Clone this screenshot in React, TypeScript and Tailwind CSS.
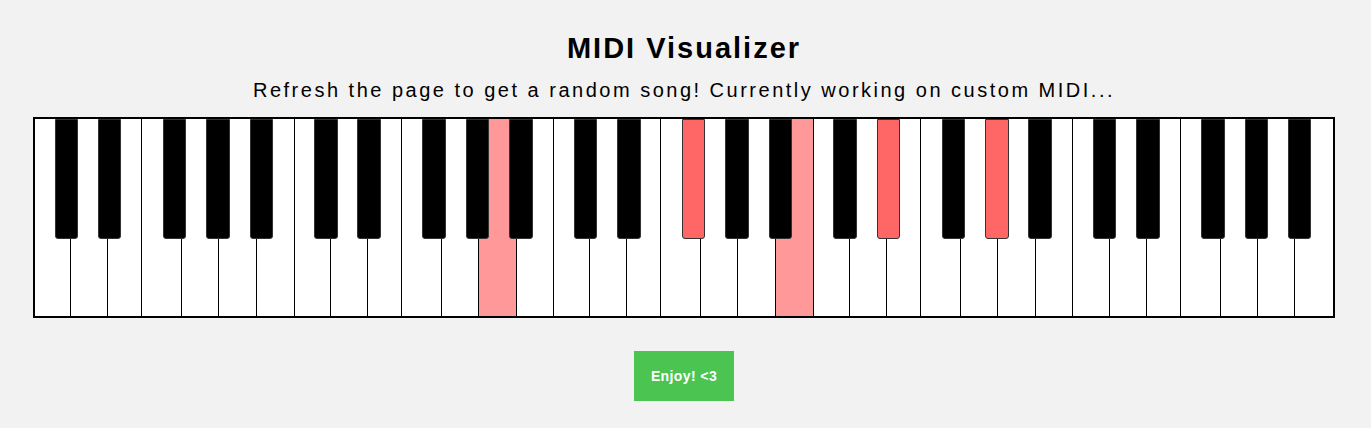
import React from "react";

type WhiteKey = { note: string; w: string };
type BlackKey = { note: string; left: string };

const whites: WhiteKey[] = [
  { note: "C", w: "w-[36.3px]" },
  { note: "D", w: "w-[37px]" },
  { note: "E", w: "w-[34px]" },
  { note: "F", w: "w-[40px]" },
  { note: "G", w: "w-[37px]" },
  { note: "A", w: "w-[37.7px]" },
  { note: "B", w: "w-[37.6px]" },
];

const blacks: BlackKey[] = [
  { note: "C#", left: "left-[19.6px]" },
  { note: "D#", left: "left-[62.9px]" },
  { note: "F#", left: "left-[127.8px]" },
  { note: "G#", left: "left-[171.3px]" },
  { note: "A#", left: "left-[214.6px]" },
];

const active = new Set(["A2", "F#3", "B3", "D#4", "G#4"]);

function Octave({ n, last }: { n: number; last: boolean }) {
  return (
    <div className="relative flex h-full w-[259.6px] flex-none">
      {whites.map((k, i) => {
        const on = active.has(k.note + n);
        const isLast = last && i === whites.length - 1;
        return (
          <div
            key={k.note}
            className={`${k.w} h-full flex-none ${on ? "bg-[#ff9999]" : "bg-white"} ${
              isLast ? "" : "border-r border-black"
            }`}
          />
        );
      })}
      {blacks.map((k) => {
        const on = active.has(k.note + n);
        return (
          <div
            key={k.note}
            className={`absolute top-0 ${k.left} h-[120px] w-[23.5px] rounded-b-[3px] border border-[#333] ${
              on ? "bg-[#ff6666]" : "bg-black"
            }`}
          />
        );
      })}
    </div>
  );
}

export default function App() {
  return (
    <div className="min-h-screen bg-[#f2f2f2] font-['Liberation_Sans',Arial,sans-serif] text-black">
      <div className="flex w-[1368px] flex-col items-center">
        <h1 className="mt-[31px] text-[29px] font-bold leading-[34px] tracking-[2px]">
          MIDI Visualizer
        </h1>
        <p className="mt-[14px] text-[20px] leading-[23px] tracking-[2.5px]">
          Refresh the page to get a random song! Currently working on custom MIDI...
        </p>
        <div className="mt-[15px] flex h-[201px] w-[1302px] border-2 border-black bg-white">
          {[1, 2, 3, 4, 5].map((n) => (
            <Octave key={n} n={n} last={n === 5} />
          ))}
        </div>
        <button className="mt-[33px] h-[50px] w-[100px] bg-[#4cc452] text-[14px] font-bold tracking-[0.4px] text-white">
          Enjoy! &lt;3
        </button>
      </div>
    </div>
  );
}
